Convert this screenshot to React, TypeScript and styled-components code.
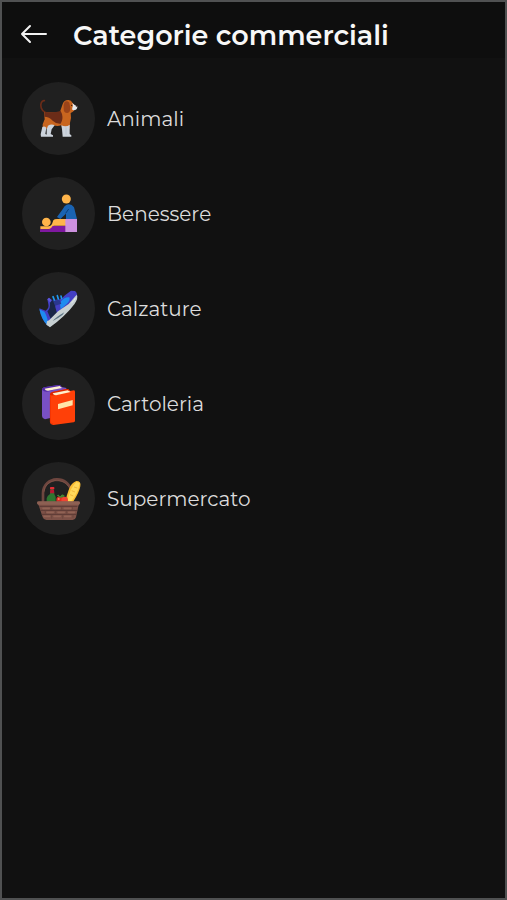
import React from "react";
import styled, { createGlobalStyle } from "styled-components";

const GlobalStyle = createGlobalStyle`
  *, *::before, *::after { box-sizing: border-box; }
  body {
    margin: 0;
    background: #111111;
    font-family: Montserrat, Inter, sans-serif;
  }
`;

const Screen = styled.div`
  display: flex;
  flex-direction: column;
  min-height: 100vh;
  border: 2px solid #505152;
  background: #111111;
`;

const Header = styled.header`
  display: flex;
  align-items: center;
  gap: 25px;
  height: 56px;
  padding: 12px 18px 0;
  background: #0e0e0e;
`;

const BackButton = styled.button`
  display: flex;
  flex: none;
  padding: 0 0 4px;
  border: 0;
  background: none;
  color: #f2f2f2;
  cursor: pointer;
`;

const Title = styled.h1`
  margin: 0;
  color: #f7f7f7;
  font-size: 27px;
  font-weight: 600;
  line-height: 36px;
  white-space: nowrap;
`;

const CategoryList = styled.ul`
  display: flex;
  flex-direction: column;
  gap: 22px;
  margin: 0;
  padding: 24px 20px;
  list-style: none;
`;

const CategoryLink = styled.a`
  display: flex;
  align-items: center;
  gap: 12px;
  color: #dcdcdc;
  font-size: 20px;
  line-height: 28px;
  text-decoration: none;
`;

const IconDisc = styled.span`
  display: flex;
  flex: none;
  width: 73px;
  height: 73px;
  border-radius: 50%;
  background: #202020;
`;

const Picture = styled.svg`
  display: block;
  width: 100%;
  height: 100%;
`;

const Dog = () => (
  <Picture viewBox="12 12 219 219" aria-hidden="true">
    <path d="M83 104C69 99 66 82 70 74Q73 67 79 68" fill="none" stroke="#6b2c18" strokeWidth="5" strokeLinecap="round" />
    <path d="M78 102Q104 106 126 101L134 78Q138 66 150 66Q159 65 164 75L169 82V97Q164 104 158 105Q161 120 156 134L155 152H133L130 142Q118 146 106 142L98 152H74V139L80 124Z" fill="#c8651f" />
    <path d="M79 101Q105 106 128 99L132 108Q136 124 128 137Q114 138 104 128Q94 116 79 116Z" fill="#6b2c18" />
    <path d="M140 71Q148 67 154 74L157 90Q157 104 148 105Q137 105 137 92Q136 78 140 71Z" fill="#9a4319" />
    <path d="M163 75L170 81L178 84Q179 97 166 97Q160 95 163 89Q166 84 163 75Z" fill="#e5e8ec" />
    <circle cx="176" cy="83" r="3" fill="#342422" />
    <circle cx="161" cy="82" r="2" fill="#291811" />
    <path d="M73 147Q79 143 85 149L82 168L90 172V176H69L68 169Z M90 143Q101 136 110 142L101 154L98 168L105 172V176H86L86 154Z M130 142Q145 148 155 140L155 168L160 172V176H134L132 154Z" fill="#ccd3dc" />
    <path d="M144 148V170" fill="none" stroke="#b4becb" strokeWidth="2" />
  </Picture>
);

const Massage = () => (
  <Picture viewBox="12 12 219 219" aria-hidden="true">
    <circle cx="145" cy="78" r="13.5" fill="#ffb44a" />
    <path d="M146 95Q160 91 168 103L177 138H144V122L127 138L117 132L135 107Q139 98 146 95Z" fill="#1a63b2" />
    <path d="M143 121L152 108" stroke="#0b3d78" strokeWidth="3" />
    <circle cx="85" cy="147" r="13" fill="#ffb44a" />
    <path d="M67 160H93Q99 158 102 153L106 142Q109 138 117 138H144V158H107L99 169H67Z" fill="#ffb44a" />
    <path d="M66 169H92Q99 168 104 159H144V177H66Z" fill="#7f18a0" />
    <path d="M142 138H177V177H142Z" fill="#cd91df" />
  </Picture>
);

const Shoe = () => (
  <Picture viewBox="12 12 219 219" aria-hidden="true">
    <path d="M64 121L83 128Q94 120 91 109L88 94L93 89L103 97L125 94Q134 91 141 82L159 68L171 69Q180 76 177 90Q161 122 98 174L88 172Q72 157 64 121Z" fill="#433fc4" />
    <path d="M64 124L79 131Q88 144 91 168L88 172Q70 155 64 124Z" fill="#1f8cf0" />
    <path d="M129 100Q140 86 154 88Q158 98 146 108L128 124Q124 111 129 100Z" fill="#1f8cf0" />
    <path d="M88 94L93 89L100 96L97 104Z" fill="#5e56da" />
    <path d="M88 130Q98 120 96 104L103 96L110 99L112 118L117 136L98 152Z" fill="#192647" />
    <path d="M105 98L124 95L130 107L111 113Z" fill="#2a378f" />
    <path d="M105 86L109 96M118 83L121 93M129 84L131 92" fill="none" stroke="#219af1" strokeWidth="5" strokeLinecap="round" />
    <path d="M87 160L93 157L120 130L152 108L176 80Q182 90 169 109Q142 145 96 178L85 170Z" fill="#c7d0d2" />
    <path d="M104 159Q112 149 139 133L134 140Q119 152 104 159Z" fill="#5b7484" />
    <path d="M160 106Q169 97 172 90" fill="none" stroke="#e5ebeb" strokeWidth="3" />
  </Picture>
);

const Books = () => (
  <Picture viewBox="12 12 219 219" aria-hidden="true">
    <path d="M72 82Q71 76 78 73L121 66Q127 65 131 72L145 75V154L81 169Q72 166 72 159Z" fill="#7950c4" />
    <path d="M73 81Q71 75 79 73L121 66Q129 65 131 73L94 85Q79 88 73 81Z" fill="#5129a3" />
    <path d="M80 77L125 69L132 75L91 83Q82 84 80 77Z" fill="#fff2d3" />
    <path d="M96 94L105 87L145 78Q153 77 156 84L168 82Q171 82 171 87V173Q171 177 167 178L106 186Q96 184 96 177Z" fill="#ff4008" />
    <path d="M96 96Q94 88 105 86L145 78Q153 77 156 84L115 95Q101 99 96 96Z" fill="#dc2600" />
    <path d="M104 91L149 82L158 87L114 97Q106 97 104 91Z" fill="#fff0cc" />
    <path d="M120 123L164 111V127L120 139Z" fill="#ffe4a8" />
    <path d="M97 98V177Q98 182 106 183" fill="none" stroke="#ed2d00" strokeWidth="2" />
  </Picture>
);

const Basket = () => (
  <Picture viewBox="12 12 219 219" aria-hidden="true">
    <path d="M75 134V105C77 53 153 49 160 102V133" fill="none" stroke="#6e463f" strokeWidth="8" />
    <path d="M78 101Q82 73 110 68Q139 66 152 86" fill="none" stroke="#89594c" strokeWidth="2" />
    <path d="M143 132Q145 113 152 96Q160 74 175 69Q190 69 187 85Q184 103 165 132Z" fill="#f9bd32" />
    <path d="M149 128Q154 93 175 72L185 75Q181 103 160 130Z" fill="#ffd95b" />
    <path d="M168 87L178 90M161 98L171 102M156 110L166 114" stroke="#e8a32a" strokeWidth="2" />
    <path d="M96 108L98 89H106L109 108L113 117V134H86V121Q87 114 96 108Z" fill="#2e7530" />
    <rect x="96" y="87" width="13" height="7" rx="2" fill="#e52c35" />
    <path d="M97 95H108L109 106H96Z" fill="#b81632" />
    <circle cx="126" cy="126" r="11" fill="#dd2c22" />
    <circle cx="140" cy="126" r="10" fill="#ef4432" />
    <circle cx="122" cy="123" r="3" fill="#ff7c68" />
    <path d="M126 118Q120 107 118 113M127 118Q131 106 139 114Q133 117 127 118Z" fill="#438a34" stroke="#438a34" strokeWidth="3" />
    <path d="M57 131H186L181 145L174 178Q172 186 164 186H85Q77 186 74 178L63 145Z" fill="#7d5147" />
    <rect x="57" y="130" width="129" height="10" rx="5" fill="#8d6053" />
    <path d="M64 145H178M68 157H177M71 169H174" stroke="#5b3a34" strokeWidth="3" />
    <path d="M75 151H94M107 151H126M139 151H159M87 163H106M120 163H139M152 163H169M78 175H95M108 175H127M140 175H158" stroke="#916355" strokeWidth="5" strokeLinecap="round" />
    <path d="M99 145V155M131 145V155M163 145V155M82 157V167M113 157V167M146 157V167M101 169V182M134 169V182M165 169V179" stroke="#65423a" strokeWidth="2" />
  </Picture>
);

const categories = [
  { name: "Animali", Icon: Dog },
  { name: "Benessere", Icon: Massage },
  { name: "Calzature", Icon: Shoe },
  { name: "Cartoleria", Icon: Books },
  { name: "Supermercato", Icon: Basket },
];

export default function App() {
  return (
    <>
      <GlobalStyle />
      <Screen>
        <Header>
          <BackButton type="button" aria-label="Indietro">
            <svg width="28" height="20" viewBox="0 0 28 20" fill="none" stroke="currentColor" strokeWidth="2" strokeLinecap="round" strokeLinejoin="round" aria-hidden="true">
              <path d="M26 10H2M10 2L2 10L10 18" />
            </svg>
          </BackButton>
          <Title>Categorie commerciali</Title>
        </Header>
        <main>
          <CategoryList>
            {categories.map(({ name, Icon }) => (
              <li key={name}>
                <CategoryLink href={`#${name.toLowerCase()}`}>
                  <IconDisc>
                    <Icon />
                  </IconDisc>
                  {name}
                </CategoryLink>
              </li>
            ))}
          </CategoryList>
        </main>
      </Screen>
    </>
  );
}
